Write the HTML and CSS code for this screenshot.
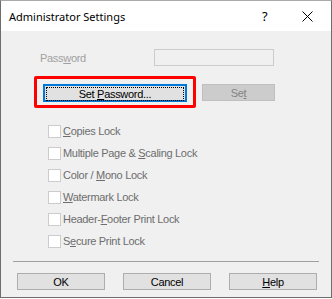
FILE: index.html
```html
<!DOCTYPE html>
<html lang="en">
<head>
  <meta charset="UTF-8">
  <title>Administrator Settings</title>
  <link rel="stylesheet" href="styles.css">
</head>
<body>

  <!-- Dialog window -->
  <div class="dialog">

    <!-- Title bar -->
    <div class="titlebar">
      <span class="title">Administrator Settings</span>
      <span class="help-btn">?</span>
      <span class="close-btn">
        <svg width="11" height="11" viewBox="0 0 11 11">
          <path d="M0.5 0.5 L10.5 10.5 M10.5 0.5 L0.5 10.5" stroke="#000" stroke-width="1"/>
        </svg>
      </span>
    </div>

    <!-- Content -->
    <div class="content">
      <div class="password-row">
        <span class="label disabled">Pass<u>w</u>ord</span>
        <div class="textbox"></div>
      </div>

      <div class="set-row">
        <div class="highlight">
          <button class="btn btn-focus"><span class="focus-ring">Set <u>P</u>assword...</span></button>
        </div>
        <button class="btn btn-disabled">Se<u>t</u></button>
      </div>

      <div class="locks">
        <div class="lock"><span class="box"></span><span><u>C</u>opies Lock</span></div>
        <div class="lock"><span class="box"></span><span>Multiple Page &amp; <u>S</u>caling Lock</span></div>
        <div class="lock"><span class="box"></span><span>Color / <u>M</u>ono Lock</span></div>
        <div class="lock"><span class="box"></span><span><u>W</u>atermark Lock</span></div>
        <div class="lock"><span class="box"></span><span>Header-<u>F</u>ooter Print Lock</span></div>
        <div class="lock"><span class="box"></span><span>S<u>e</u>cure Print Lock</span></div>
      </div>

      <div class="separator"></div>

      <div class="footer-buttons">
        <button class="btn">OK</button>
        <button class="btn">Cancel</button>
        <button class="btn"><u>H</u>elp</button>
      </div>
    </div>
  </div>

</body>
</html>
```

FILE: styles.css
```css
/* General Page Styling */
body {
  margin: 0;
  padding: 0;
  background-color: #ffffff;
  font-family: 'Liberation Sans', Arial, sans-serif;
  font-size: 11px;
  letter-spacing: -0.3px;
  color: #000;
}

u {
  text-decoration: underline;
  text-underline-offset: 1px;
}

/* Dialog frame */
.dialog {
  width: 332px;
  height: 298px;
  box-sizing: border-box;
  border: 1px solid #6d6d6d;
  border-top-color: #aaaaaa;
  background-color: #f0f0f0;
  display: flex;
  flex-direction: column;
}

/* Title bar */
.titlebar {
  height: 30px;
  background-color: #ffffff;
  display: flex;
  align-items: center;
  flex-shrink: 0;
  letter-spacing: 0;
}

.title {
  font-family: 'Noto Sans', sans-serif;
  font-size: 11px;
  padding-left: 8px;
  flex: 1;
}

.help-btn {
  font-family: 'Noto Sans', sans-serif;
  font-size: 13px;
  width: 14px;
  margin-right: 26px;
}

.close-btn {
  display: flex;
  margin-right: 18px;
}

/* Content Section */
.content {
  padding: 18px 0 0 0;
}

.password-row {
  display: flex;
  align-items: center;
  height: 17px;
}

.label {
  width: 114px;
  padding-left: 39px;
}

.disabled {
  color: #a0a0a0;
}

.textbox {
  width: 120px;
  height: 17px;
  box-sizing: border-box;
  border: 1px solid #cccccc;
  background-color: #f0f0f0;
}

/* Set password row */
.set-row {
  display: flex;
  align-items: flex-start;
  margin-top: 10px;
  margin-left: 33px;
}

.highlight {
  border: 3px solid #ff0000;
  border-radius: 2px;
  padding: 5px 6px 3px 6px;
}

.btn {
  font-family: 'Liberation Sans', Arial, sans-serif;
  font-size: 11px;
  letter-spacing: -0.3px;
  color: #000;
  background-color: #e1e1e1;
  border: 1px solid #adadad;
  height: 17px;
  padding: 0;
  margin: 0;
}

.btn-focus {
  display: block;
  width: 144px;
  height: 18px;
  border: 2px solid #0078d7;
  padding: 1px;
}

.focus-ring {
  display: block;
  height: 12px;
  line-height: 12px;
  border: 1px dotted #000;
  text-align: center;
}

.btn-disabled {
  width: 73px;
  margin-left: 6px;
  margin-top: 8px;
  background-color: #cccccc;
  border-color: #bfbfbf;
  color: #838383;
}

/* Lock checkboxes */
.locks {
  display: flex;
  flex-direction: column;
  margin-top: 12px;
  margin-left: 47px;
}

.lock {
  display: flex;
  align-items: center;
  gap: 2px;
  height: 22px;
  color: #6d6d6d;
}

.box {
  width: 13px;
  height: 13px;
  box-sizing: border-box;
  border: 1px solid #cccccc;
  background-color: #ffffff;
}

/* Separator */
.separator {
  height: 1px;
  background-color: #a0a0a0;
  margin: 9px 12px 0 12px;
}

/* Footer buttons */
.footer-buttons {
  display: flex;
  gap: 18px;
  margin-top: 11px;
  padding-left: 16px;
}

.footer-buttons .btn {
  width: 88px;
}
```
